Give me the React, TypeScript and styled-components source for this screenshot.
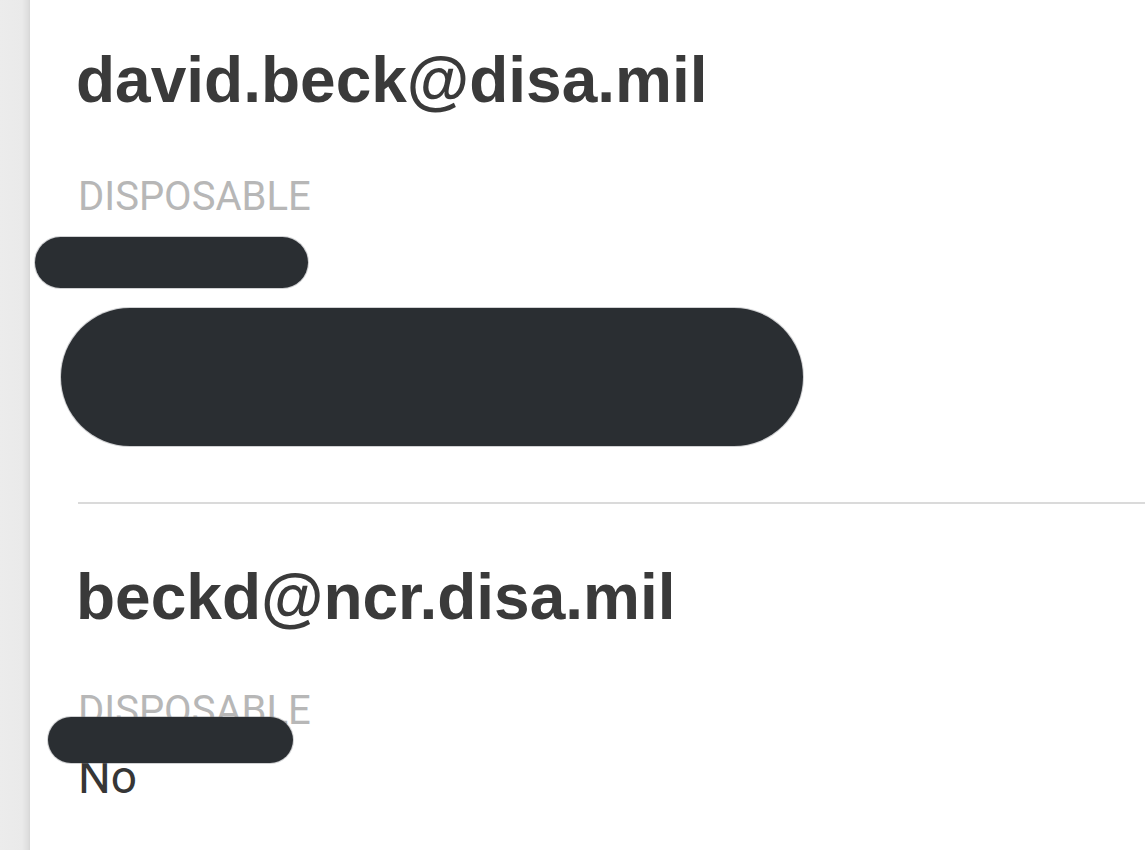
import React from "react";
import styled, { createGlobalStyle } from "styled-components";

const GlobalStyle = createGlobalStyle`
  html, body {
    margin: 0;
    padding: 0;
    background: #ffffff;
  }
  body {
    font-family: "Liberation Sans", Arial, sans-serif;
    overflow: hidden;
  }
`;

const Page = styled.div`
  display: flex;
  min-height: 100vh;
  width: 100%;
`;

const Rail = styled.aside`
  flex: 0 0 30px;
  background: linear-gradient(to right, #ececec 0, #eaeaea 22px, #dedede 28px, #d6d6d6 30px);
`;

const Content = styled.main`
  flex: 1;
  display: flex;
  flex-direction: column;
  background: #ffffff;
`;

const Entry = styled.section<{ $top: number; $bottom: number }>`
  position: relative;
  display: flex;
  flex-direction: column;
  padding: ${(p) => p.$top}px 0 ${(p) => p.$bottom}px 46px;
`;

const Address = styled.h2`
  margin: 0;
  font-family: "Liberation Sans", Arial, sans-serif;
  font-weight: 700;
  font-size: 64px;
  line-height: 72px;
  color: #3a3a3a;
  letter-spacing: 0;
`;

const Label = styled.div<{ $gap: number }>`
  margin-top: ${(p) => p.$gap}px;
  font-family: Roboto, "Liberation Sans", sans-serif;
  font-size: 40px;
  line-height: 48px;
  color: #b7b7b7;
  padding-left: 2px;
`;

const Value = styled.div`
  margin-top: 16px;
  font-family: Roboto, "Liberation Sans", sans-serif;
  font-size: 46px;
  line-height: 52px;
  color: #363636;
  padding-left: 2px;
`;

const Divider = styled.hr`
  margin: 0 0 0 48px;
  border: 0;
  height: 2px;
  background: #dadada;
`;

const Redaction = styled.div<{ $w: number; $h: number }>`
  width: ${(p) => p.$w}px;
  height: ${(p) => p.$h}px;
  border-radius: ${(p) => p.$h / 2}px;
  background: #2a2e32;
  box-shadow: 0 0 0 1px rgba(120, 124, 128, 0.35);
`;

const BlockRedaction = styled(Redaction)`
  margin-top: 19px;
  margin-left: -15px;
`;

const OverlayRedaction = styled(Redaction)<{ $x: number; $y: number }>`
  position: absolute;
  left: ${(p) => p.$x}px;
  top: ${(p) => p.$y}px;
`;

export default function App() {
  return (
    <>
      <GlobalStyle />
      <Page>
        <Rail />
        <Content>
          <Entry $top={44} $bottom={56}>
            <Address>david.beck@disa.mil</Address>
            <Label $gap={57}>DISPOSABLE</Label>
            <Value>No</Value>
            <BlockRedaction $w={742} $h={138} />
            <OverlayRedaction $x={5} $y={237} $w={273} $h={51} />
          </Entry>
          <Divider />
          <Entry $top={57} $bottom={46}>
            <Address>beckd@ncr.disa.mil</Address>
            <Label $gap={54}>DISPOSABLE</Label>
            <Value>No</Value>
            <OverlayRedaction $x={18} $y={213} $w={245} $h={46} />
          </Entry>
        </Content>
      </Page>
    </>
  );
}
